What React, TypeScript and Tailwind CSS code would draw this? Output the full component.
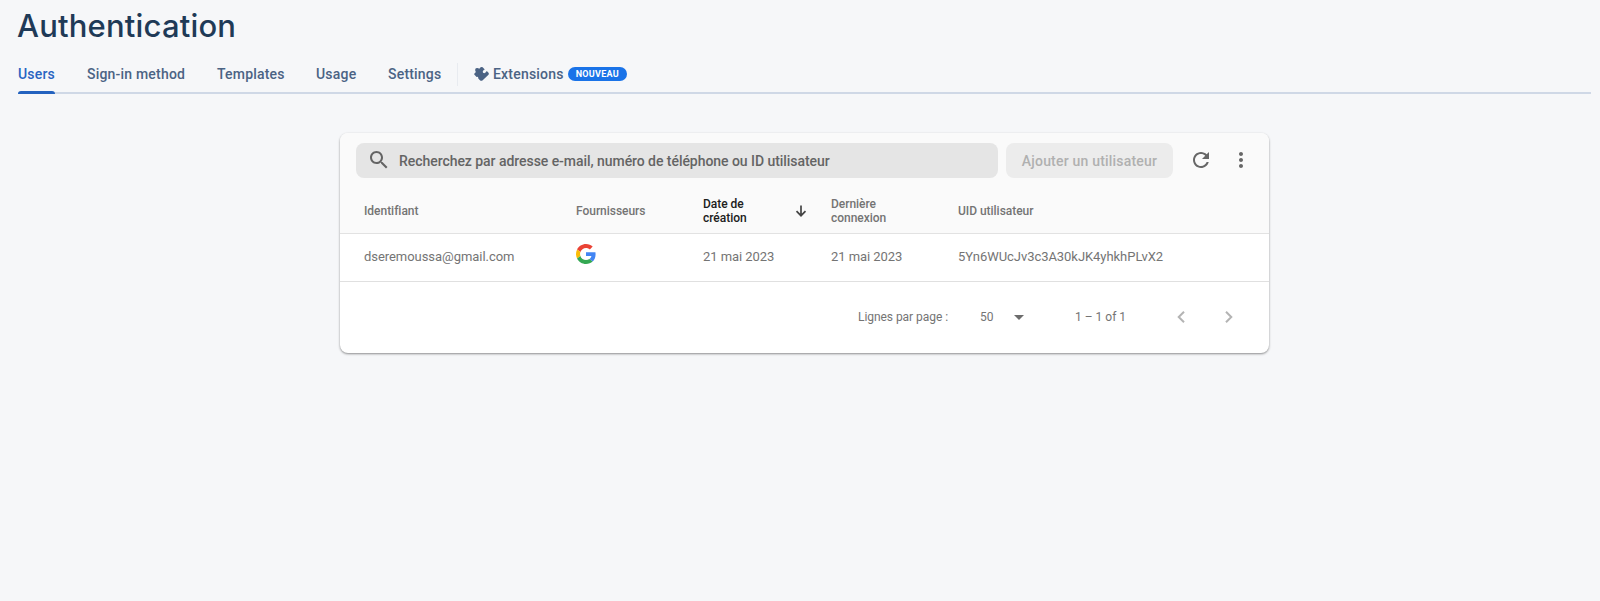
import React from 'react';

const TABS = [
  { label: 'Sign-in method', width: 'w-[98px]' },
  { label: 'Templates', width: 'w-[67px]' },
  { label: 'Usage', width: 'w-[40px]' },
  { label: 'Settings', width: 'w-[53px]' },
];

function Icon({ d, className }: { d: string; className: string }) {
  return (
    <svg viewBox="0 0 24 24" fill="currentColor" className={`shrink-0 ${className}`}>
      <path d={d} />
    </svg>
  );
}

const SEARCH =
  'M15.5 14h-.79l-.28-.27C15.41 12.59 16 11.11 16 9.5 16 5.91 13.09 3 9.5 3S3 5.91 3 9.5 5.91 16 9.5 16c1.61 0 3.09-.59 4.23-1.57l.27.28v.79l5 4.99L20.49 19l-4.99-5zm-6 0C7.01 14 5 11.99 5 9.5S7.01 5 9.5 5 14 7.01 14 9.5 11.99 14 9.5 14z';
const REFRESH =
  'M17.65 6.35C16.2 4.9 14.21 4 12 4c-4.42 0-7.99 3.58-7.99 8s3.57 8 7.99 8c3.73 0 6.84-2.55 7.73-6h-2.08c-.82 2.33-3.04 4-5.65 4-3.31 0-6-2.69-6-6s2.69-6 6-6c1.66 0 3.14.69 4.22 1.78L13 11h7V4l-2.35 2.35z';
const MORE =
  'M12 8c1.1 0 2-.9 2-2s-.9-2-2-2-2 .9-2 2 .9 2 2 2zm0 2c-1.1 0-2 .9-2 2s.9 2 2 2 2-.9 2-2-.9-2-2-2zm0 6c-1.1 0-2 .9-2 2s.9 2 2 2 2-.9 2-2-.9-2-2-2z';

function ExtensionIcon() {
  return (
    <svg viewBox="0 0 43 41" fill="currentColor" className="mr-1 h-[14px] w-[15px] shrink-0">
      <path d="M1 19L5 15Q1 8 5 4Q10 1 15 5L19 1Q22 -1 25 1L31 7Q23 10 26 17Q32 21 37 12L42 17Q44 20 42 23L25 39Q21 42 17 39L12 34Q13 28 7 29L1 23Q-1 21 1 19Z" />
    </svg>
  );
}

function GoogleLogo() {
  return (
    <svg viewBox="0 0 48 48" className="size-5">
      <path fill="#EA4335" d="M24 9.5c3.54 0 6.71 1.22 9.21 3.6l6.85-6.85C35.9 2.38 30.47 0 24 0 14.62 0 6.51 5.38 2.56 13.22l7.98 6.19C12.43 13.72 17.74 9.5 24 9.5z" />
      <path fill="#4285F4" d="M46.98 24.55c0-1.57-.15-3.09-.38-4.55H24v9.02h12.94c-.58 2.96-2.26 5.48-4.78 7.18l7.73 6c4.51-4.18 7.09-10.36 7.09-17.65z" />
      <path fill="#FBBC05" d="M10.53 28.59c-.48-1.45-.76-2.99-.76-4.59s.27-3.14.76-4.59l-7.98-6.19C.92 16.46 0 20.12 0 24c0 3.88.92 7.54 2.56 10.78l7.97-6.19z" />
      <path fill="#34A853" d="M24 48c6.48 0 11.93-2.13 15.89-5.81l-7.73-6c-2.15 1.45-4.92 2.3-8.16 2.3-6.26 0-11.57-4.22-13.47-9.91l-7.98 6.19C6.51 42.62 14.62 48 24 48z" />
    </svg>
  );
}

export default function App() {
  return (
    <div className="h-[601px] overflow-hidden bg-[#f6f7f9] font-['Roboto',sans-serif]">
      <header className="pl-[18px] pr-[9px]">
        <h1 className="-ml-px h-[59px] pt-[7px] font-['Inter',sans-serif] text-[31px] leading-[38px] font-medium tracking-[0.18px] text-[#1f3a57]">
          Authentication
        </h1>
        <nav className="flex h-[35px] items-start border-b-2 border-[#cfd8e6] text-sm leading-[30px] font-medium tracking-[0.2px] text-[#4b6384]">
          <div className="mr-[32px] h-[35px] w-[37px] whitespace-nowrap text-[#2864c2]">
            <div className="h-[32px]">Users</div>
            <div className="h-[3px] rounded-t-[3px] bg-[#2362bf]" />
          </div>
          {TABS.map((t) => (
            <div key={t.label} className={`mr-[32px] whitespace-nowrap ${t.width}`}>
              {t.label}
            </div>
          ))}
          <div className="-ml-4 flex h-[30px] items-center">
            <div className="mr-4 h-[23px] w-px bg-[#e8ebf0]" />
            <ExtensionIcon />
            <span>Extensions</span>
            <span className="ml-[4px] flex h-[14px] items-center rounded-full bg-[#1a73e8] px-2 text-[9px] leading-none font-bold tracking-[0.3px] text-white">
              NOUVEAU
            </span>
          </div>
        </nav>
      </header>

      <main className="mt-[39px] ml-[340px] flex h-[220px] w-[929px] flex-col overflow-visible rounded-lg bg-white text-[#747474] shadow-[0_1px_2px_rgba(0,0,0,0.3),0_1px_3px_rgba(0,0,0,0.16)]">
        <section className="h-[101px] rounded-t-lg border-b border-[#e2e2e2] bg-[#fafafa]">
          <div className="flex items-center pt-[10px] pl-4">
            <div className="flex h-[35px] w-[642px] items-center rounded-lg bg-[#e5e5e5] pl-[11px] text-sm font-medium tracking-[-0.05px] text-[#646464]">
              <Icon d={SEARCH} className="mr-2 -mt-px size-6" />
              <span className="pt-px">Recherchez par adresse e-mail, numéro de téléphone ou ID utilisateur</span>
            </div>
            <button className="ml-2 h-[35px] w-[167px] rounded-lg bg-[#ececec] text-sm font-medium tracking-[0.2px] text-[#b0b0b0]">
              Ajouter un utilisateur
            </button>
            <Icon d={REFRESH} className="ml-4 -mt-px size-6 text-[#676767]" />
            <Icon d={MORE} className="ml-4 -mt-px size-6 text-[#676767]" />
          </div>
          <div className="flex h-[55px] items-center pt-[10px] pl-6 text-xs leading-[14px] font-medium tracking-[-0.03px]">
            <div className="w-[212px] pt-px">Identifiant</div>
            <div className="w-[127px] pt-px">Fournisseurs</div>
            <div className="flex w-[128px] items-center text-[#202020]">
              <div className="w-[92px]">Date de<br />création</div>
              <svg viewBox="0 0 12 12" className="mt-px size-3 text-[#444]" fill="none" stroke="currentColor" strokeWidth="1.7">
                <path d="M6 .5v10M1.5 6.2L6 10.7l4.5-4.5" />
              </svg>
            </div>
            <div className="w-[127px]">Dernière<br />connexion</div>
            <div className="pt-px">UID utilisateur</div>
          </div>
        </section>
        <section className="flex h-[48px] items-center border-b border-[#e0e0e0] pb-px pl-6 text-[13px] tracking-[-0.05px]">
          <div className="w-[212px]">dseremoussa@gmail.com</div>
          <div className="w-[127px] pb-[7px]"><GoogleLogo /></div>
          <div className="w-[128px]">21 mai 2023</div>
          <div className="w-[127px]">21 mai 2023</div>
          <div>5Yn6WUcJv3c3A30kJK4yhkhPLvX2</div>
        </section>
        <footer className="flex h-[71px] items-center pb-px pl-[518px] text-xs">
          <div className="w-[122px] tracking-[-0.05px]">Lignes par page :</div>
          <div className="w-[34px]">50</div>
          <svg viewBox="0 0 10 5" className="h-[5px] w-[10px]"><path fill="#6c6c6c" d="M0 0h10L5 5z" /></svg>
          <div className="ml-[51px] w-[102px]">1 – 1 of 1</div>
          <svg viewBox="0 0 8 12" className="h-3 w-2 text-[#b4b4b4]" fill="none" stroke="currentColor" strokeWidth="2"><path d="M7 .7L1.7 6 7 11.3" /></svg>
          <svg viewBox="0 0 8 12" className="ml-10 h-3 w-2 text-[#b4b4b4]" fill="none" stroke="currentColor" strokeWidth="2"><path d="M1 .7L6.3 6 1 11.3" /></svg>
        </footer>
      </main>
    </div>
  );
}
